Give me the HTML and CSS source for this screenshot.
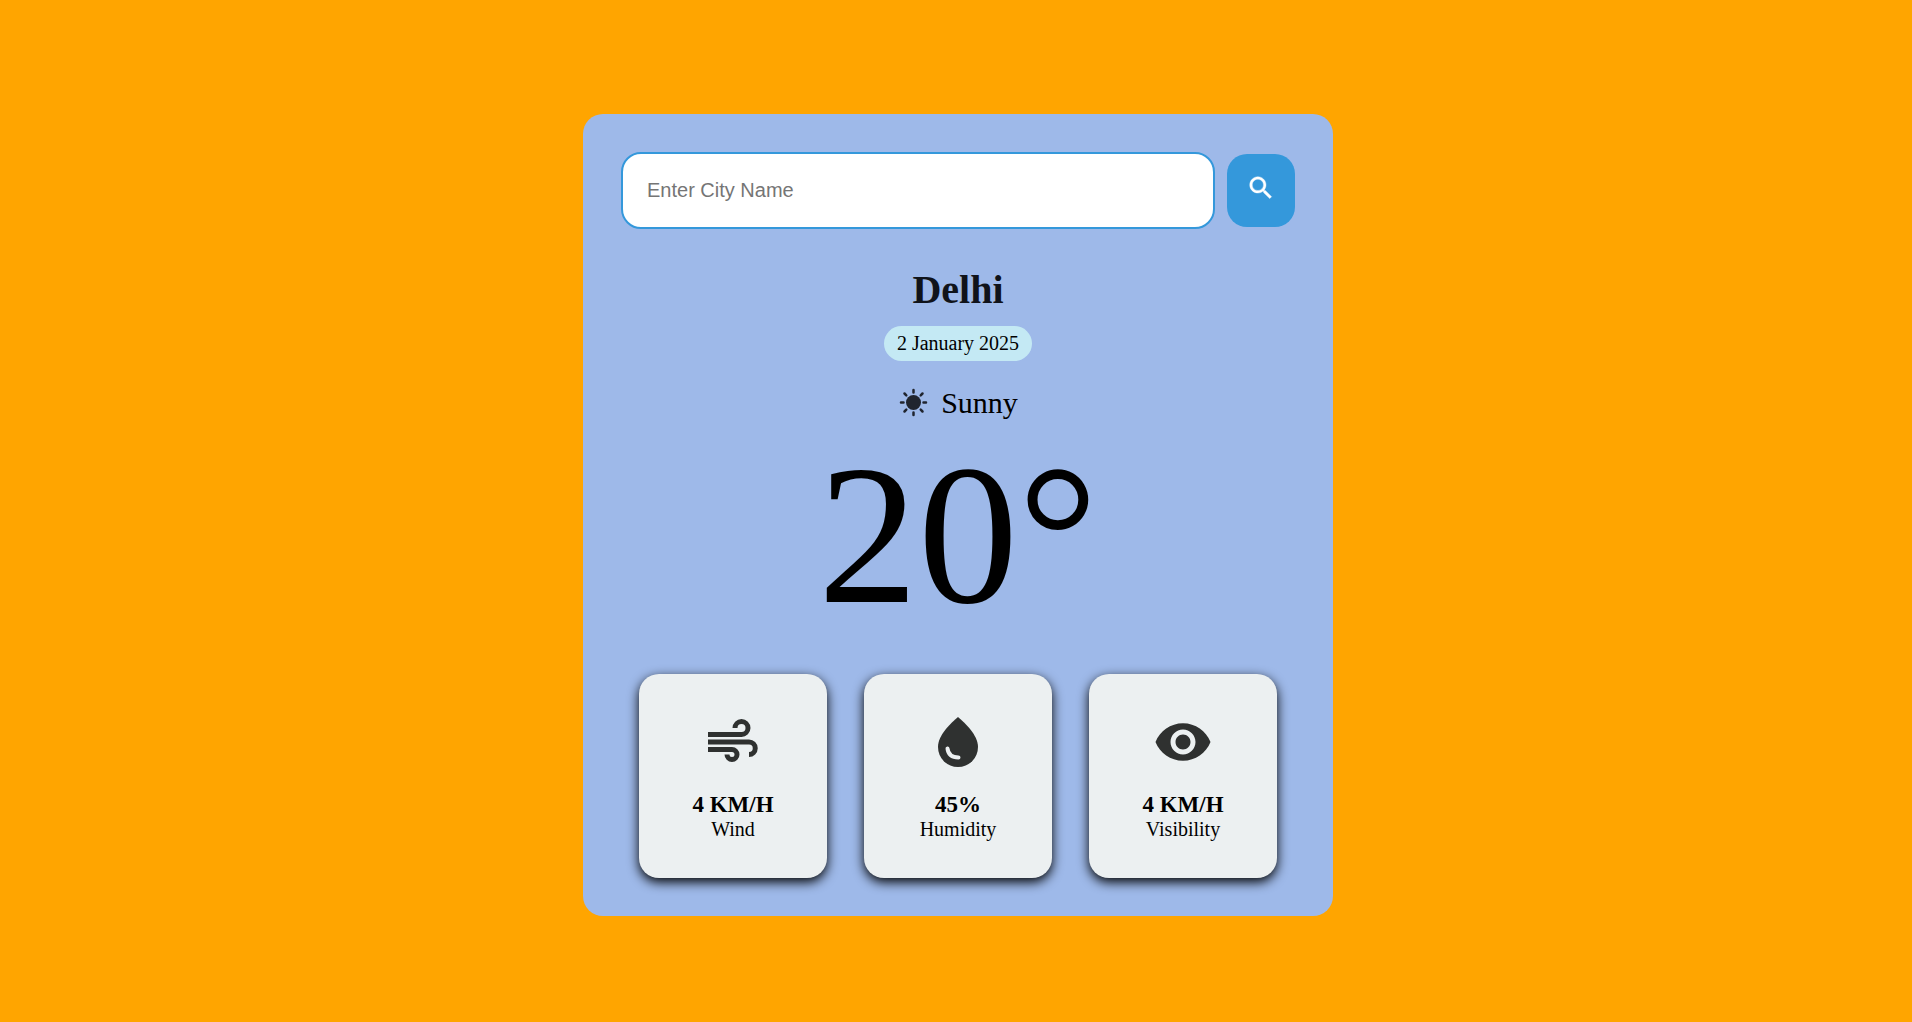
FILE: index.html
```html
<!DOCTYPE html>
<html lang="en">
<head>
<meta charset="utf-8">
<meta name="viewport" content="width=device-width, initial-scale=1">
<title>Weather</title>
<link rel="stylesheet" href="styles.css">
</head>
<body>
<main class="weather">
  <form class="search">
    <input class="search-input" type="text" placeholder="Enter City Name" aria-label="City name">
    <button class="search-button" type="submit" aria-label="Search">
      <svg class="search-icon" viewBox="0 0 24 24" aria-hidden="true"><path fill="currentColor" stroke="currentColor" stroke-width=".3" d="M15.500 14h-.790l-.280-.270C15.410 12.590 16 11.110 16 9.500 16 5.910 13.090 3 9.500 3S3 5.910 3 9.500 5.910 16 9.500 16c1.610 0 3.090-.590 4.230-1.570l.270.280v.790l5 4.990L20.490 19l-4.990-5zm-6 0C7.010 14 5 11.990 5 9.500S7.010 5 9.500 5 14 7.010 14 9.500 11.990 14 9.500 14z"/></svg>
    </button>
  </form>
  <h1 class="city">Delhi</h1>
  <p class="date">2 January 2025</p>
  <p class="condition">
    <svg class="condition-icon" viewBox="0 0 30 30" aria-hidden="true"><circle cx="15.500" cy="14.500" r="7.500" fill="currentColor"/><path fill="none" stroke="currentColor" stroke-width="2.500" stroke-linecap="round" d="M15.500 2v2.500M15.500 24.500v2.500M3 14.500h2.500M25.500 14.500h2.500M6.500 5.500l1.800 1.800M24.500 5.500l-1.800 1.800M6.500 23.500l1.800-1.800M24.500 23.500l-1.800-1.800"/></svg>
    <span>Sunny</span>
  </p>
  <p class="temperature">20°</p>
  <section class="stats" aria-label="Details">
    <article class="stat">
      <svg class="stat-icon" viewBox="0 0 60 60" aria-hidden="true"><path fill="none" stroke="currentColor" stroke-width="5" d="M5 22.500h33.500a6.500 6.500 0 1 0-6.500-6.500M5 30h41a6.250 6.250 0 0 1 0 12.500M5 37.500h24a5 5 0 1 1-5 5"/></svg>
      <h2 class="stat-value">4 KM/H</h2>
      <p class="stat-label">Wind</p>
    </article>
    <article class="stat">
      <svg class="stat-icon" viewBox="0 0 60 60" aria-hidden="true"><path fill="currentColor" d="M30 5C23 11 10 23 10 35a20 20 0 0 0 40 0C50 23 37 11 30 5z"/><path class="stat-shine" d="M19.500 36.500q1 9 11 9"/></svg>
      <h2 class="stat-value">45%</h2>
      <p class="stat-label">Humidity</p>
    </article>
    <article class="stat">
      <svg class="stat-icon" viewBox="0 0 24 24" aria-hidden="true"><path fill="currentColor" d="M12 4.500C7 4.500 2.730 7.610 1 12c1.730 4.390 6 7.500 11 7.500s9.270-3.110 11-7.500c-1.730-4.390-6-7.500-11-7.500zM12 17c-2.760 0-5-2.240-5-5s2.240-5 5-5 5 2.240 5 5-2.240 5-5 5zm0-8c-1.660 0-3 1.340-3 3s1.340 3 3 3 3-1.340 3-3-1.340-3-3-3z"/></svg>
      <h2 class="stat-value">4 KM/H</h2>
      <p class="stat-label">Visibility</p>
    </article>
  </section>
</main>
</body>
</html>
```
FILE: styles.css
```css
* {
  box-sizing: border-box;
  margin: 0;
}

body {
  min-height: 100vh;
  display: flex;
  align-items: center;
  justify-content: center;
  padding: 16px 16px 8px 20px;
  background: #ffa500;
  color: #000;
  font-family: "Liberation Serif", "Times New Roman", serif;
  font-size: 20px;
}

.weather {
  width: 100%;
  max-width: 750px;
  padding: 38px;
  border-radius: 20px;
  background: #9eb9e9;
  display: grid;
  justify-items: center;
}

.search {
  width: 100%;
  display: flex;
  align-items: center;
  gap: 12px;
}

.search-input {
  flex: 1;
  min-width: 0;
  height: 77px;
  padding: 0 24px;
  border: 2px solid #3498db;
  border-radius: 20px;
  background: #fff;
  font: 20px "Liberation Sans", Arial, sans-serif;
}

.search-input::placeholder {
  color: #757575;
}

.search-button {
  width: 68px;
  height: 73px;
  padding: 0 0 6px;
  border: 0;
  border-radius: 20px;
  background: #3498db;
  color: #fff;
}

.search-icon {
  width: 30px;
  height: 30px;
  vertical-align: middle;
}

.city {
  margin-top: 38px;
  color: #10131a;
  font-size: 40px;
  line-height: 46px;
}

.date {
  margin-top: 13px;
  padding: 6px 13px;
  border-radius: 20px;
  background: #c4e9f4;
  line-height: 23px;
}

.condition {
  display: flex;
  align-items: center;
  gap: 13px;
  margin-top: 25px;
  font-size: 30px;
  line-height: 34px;
}

.condition-icon {
  width: 30px;
  height: 30px;
  color: #20252f;
}

.temperature {
  font-size: 200px;
  line-height: 230px;
}

.stats {
  width: 100%;
  display: grid;
  grid-template-columns: repeat(3, 1fr);
  gap: 37px;
  margin-top: 24px;
  padding: 0 18px;
}

.stat {
  display: flex;
  flex-direction: column;
  align-items: center;
  padding: 38px 8px 37px;
  border-radius: 20px;
  background: #ecf0f1;
  box-shadow: 0 4px 12px #000;
}

.stat-icon {
  width: 60px;
  height: 60px;
  margin-bottom: 19px;
  color: #2f3130;
}

.stat-shine {
  fill: none;
  stroke: #ecf0f1;
  stroke-width: 4;
  stroke-linecap: round;
}

.stat-value {
  font-size: 23px;
  line-height: 27px;
}

.stat-label {
  line-height: 23px;
}
```
